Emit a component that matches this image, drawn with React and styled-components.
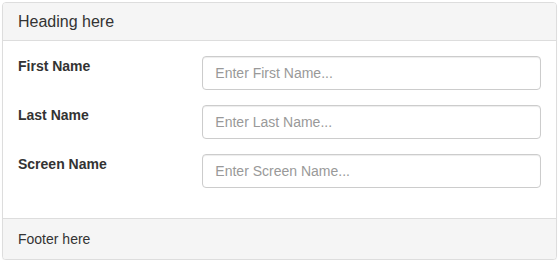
import React from 'react';
import styled, { createGlobalStyle } from 'styled-components';

const GlobalStyle = createGlobalStyle`
  html, body {
    margin: 0;
    padding: 0;
    background: #fff;
  }

  body {
    font-family: "Liberation Sans", Arial, Helvetica, sans-serif;
    font-size: 14px;
    line-height: 1.42857143;
    color: #333;
  }

  * {
    box-sizing: border-box;
  }
`;

const Page = styled.div`
  padding: 2px 3px 0 2px;
`;

const Panel = styled.div`
  background: #fff;
  border: 1px solid #ddd;
  border-radius: 4px;
  box-shadow: 0 1px 1px rgba(0, 0, 0, 0.05);
`;

const PanelHeading = styled.div`
  padding: 10px 15px;
  background: #f5f5f5;
  border-bottom: 1px solid #ddd;
  border-radius: 3px 3px 0 0;
`;

const PanelTitle = styled.h3`
  margin: 0;
  font-size: 16px;
  font-weight: normal;
  line-height: 17px;
  color: #333;
`;

const PanelBody = styled.div`
  padding: 15px;
`;

const FormRow = styled.div`
  display: grid;
  grid-template-columns: 1fr 2fr;
  margin: 0 -15px 15px;
`;

const Label = styled.label`
  padding: 0 15px;
  font-weight: bold;
  line-height: 20px;
  color: #333;
`;

const Field = styled.div`
  padding: 0 15px;
`;

const Input = styled.input`
  display: block;
  width: 100%;
  height: 34px;
  padding: 6px 12px;
  font-family: inherit;
  font-size: 14px;
  line-height: 1.42857143;
  color: #555;
  background: #fff;
  border: 1px solid #ccc;
  border-radius: 4px;
  box-shadow: inset 0 1px 1px rgba(0, 0, 0, 0.075);
  outline: none;

  &::placeholder {
    color: #999;
  }
`;

const PanelFooter = styled.div`
  padding: 10px 15px;
  background: #f5f5f5;
  border-top: 1px solid #ddd;
  border-radius: 0 0 3px 3px;
  line-height: 20px;
`;

const FIELDS = [
  { id: 'firstName', label: 'First Name', placeholder: 'Enter First Name...' },
  { id: 'lastName', label: 'Last Name', placeholder: 'Enter Last Name...' },
  { id: 'screenName', label: 'Screen Name', placeholder: 'Enter Screen Name...' },
];

const App = () => (
  <Page>
    <GlobalStyle />
    <Panel>
      <PanelHeading>
        <PanelTitle>Heading here</PanelTitle>
      </PanelHeading>
      <PanelBody>
        {FIELDS.map(({ id, label, placeholder }) => (
          <FormRow key={id}>
            <Label htmlFor={id}>{label}</Label>
            <Field>
              <Input id={id} type="text" placeholder={placeholder} />
            </Field>
          </FormRow>
        ))}
      </PanelBody>
      <PanelFooter>Footer here</PanelFooter>
    </Panel>
  </Page>
);

export default App;
